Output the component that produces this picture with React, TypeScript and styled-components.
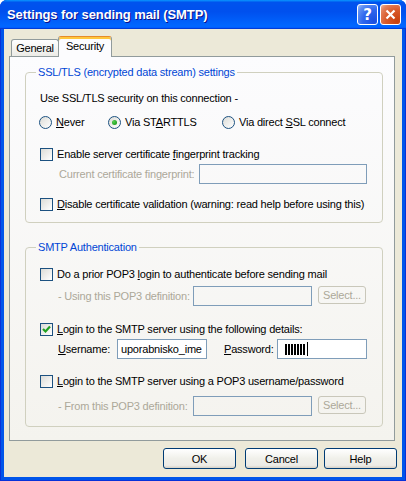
import React from "react";
import styled, { createGlobalStyle } from "styled-components";

const GlobalStyle = createGlobalStyle`
  html, body {
    margin: 0;
    padding: 0;
    background: #ffffff;
  }
  body {
    font-family: "Liberation Sans", Arial, sans-serif;
    font-size: 11px;
    letter-spacing: -0.2px;
    color: #000;
  }
`;

const Window = styled.div`
  width: 406px;
  height: 481px;
  box-sizing: border-box;
  display: flex;
  flex-direction: column;
  background: #0055ea;
  box-shadow: inset 0 0 0 1px #0831d9;
  border-radius: 7px 7px 0 0;
  overflow: hidden;
`;

const TitleBar = styled.div`
  height: 29px;
  flex: none;
  display: flex;
  align-items: center;
  justify-content: space-between;
  padding: 0 5px 0 7px;
  background: linear-gradient(
    180deg,
    #0997ff,
    #0053ee 8%,
    #0050ee 40%,
    #0066ff 88%,
    #0066ff 93%,
    #005bff 95%,
    #003dd7 96%,
    #003dd7
  );
`;

const Title = styled.span`
  color: #fff;
  font-weight: bold;
  font-size: 13px;
  letter-spacing: -0.1px;
  text-shadow: 1px 1px #0f1089;
`;

const CaptionButtons = styled.div`
  display: flex;
  gap: 2px;
`;

const CaptionButton = styled.div<{ $variant: "help" | "close" }>`
  box-sizing: border-box;
  width: 21px;
  height: 21px;
  border: 1px solid #fff;
  border-radius: 3px;
  display: flex;
  align-items: center;
  justify-content: center;
  color: #fff;
  font-family: "DejaVu Sans", sans-serif;
  font-weight: bold;
  font-size: 15px;
  background: ${(p) =>
    p.$variant === "close"
      ? "radial-gradient(circle at 85% 85%, #c8400c 0%, #d95a2b 50%, #e3805a 80%, #f0b9a0 100%)"
      : "radial-gradient(circle at 85% 85%, #1b4fe0 0%, #2f67ee 50%, #5d8ff3 80%, #a5c0f7 100%)"};
`;

const Client = styled.div`
  flex: 1;
  margin: 0 4px 4px;
  background: #ece9d8;
  display: flex;
  flex-direction: column;
  padding: 7px 7px 8px 5px;
`;

const TabStrip = styled.div`
  height: 20px;
  display: flex;
  align-items: flex-end;
  padding-left: 2px;
  position: relative;
  z-index: 1;
`;

const Tab = styled.div<{ $active?: boolean; $w: number }>`
  box-sizing: border-box;
  width: ${(p) => p.$w}px;
  height: ${(p) => (p.$active ? 21 : 17)}px;
  margin-bottom: ${(p) => (p.$active ? -1 : 0)}px;
  margin-left: ${(p) => (p.$active ? -1 : 0)}px;
  border: 1px solid #919b9c;
  border-bottom: none;
  border-radius: 3px 3px 0 0;
  display: flex;
  align-items: center;
  justify-content: center;
  padding-bottom: ${(p) => (p.$active ? 2 : 0)}px;
  background: ${(p) => (p.$active ? "#fcfcfe" : "linear-gradient(#ffffff, #ecebe6)")};
  ${(p) =>
    p.$active &&
    `
    border-top: 1px solid #e68b2c;
    box-shadow: inset 0 2px #ffc73c;
  `}
`;

const Panel = styled.div`
  box-sizing: border-box;
  height: 385px;
  flex: none;
  border: 1px solid #919b9c;
  background: linear-gradient(#fcfcfe, #f4f3ee);
  padding: 9px 11px 0 15px;
  display: flex;
  flex-direction: column;
`;

const Group = styled.fieldset<{ $mt?: number }>`
  margin: ${(p) => p.$mt ?? 0}px 0 0;
  padding: 0 14px 10px;
  border: 1px solid #d0d0bf;
  border-radius: 4px;
  display: flex;
  flex-direction: column;
  min-inline-size: 0;
`;

const GroupTitle = styled.legend`
  padding: 0 2px;
  margin-left: -4px;
  color: #0046d5;
  line-height: 13px;
`;

const Row = styled.div<{ $mt: number; $indent?: number }>`
  display: flex;
  align-items: center;
  min-height: 16px;
  margin-top: ${(p) => p.$mt}px;
  padding-left: ${(p) => p.$indent ?? 0}px;
`;

const RadioRow = styled.div`
  display: grid;
  grid-template-columns: 69px 114px auto;
  align-items: center;
  height: 16px;
  margin-top: 8px;
  margin-left: -1px;
`;

const Option = styled.label`
  display: inline-flex;
  align-items: center;
  gap: 4px;
  white-space: nowrap;
`;

const Check = styled.span`
  box-sizing: border-box;
  width: 13px;
  height: 13px;
  flex: none;
  border: 1px solid #1c5180;
  background: linear-gradient(135deg, #dcdcd7, #ffffff);
  display: inline-flex;
  align-items: center;
  justify-content: center;
`;

const Radio = styled(Check)`
  border-radius: 50%;
`;

const Dot = styled.span`
  width: 5px;
  height: 5px;
  border-radius: 50%;
  background: radial-gradient(circle at 35% 35%, #55d051, #21a121 70%);
`;

const Label = styled.span<{ $w?: number; $muted?: boolean; $ml?: number }>`
  flex: none;
  white-space: nowrap;
  width: ${(p) => (p.$w ? `${p.$w}px` : "auto")};
  margin-left: ${(p) => p.$ml ?? 0}px;
  color: ${(p) => (p.$muted ? "#aca899" : "#000")};
`;

const TextBox = styled.div<{ $w: number; $disabled?: boolean }>`
  box-sizing: border-box;
  flex: none;
  width: ${(p) => p.$w}px;
  height: 20px;
  border: 1px solid #7f9db9;
  background: ${(p) => (p.$disabled ? "transparent" : "#ffffff")};
  display: flex;
  align-items: center;
  padding-left: 3px;
  white-space: nowrap;
`;

const PasswordMask = styled.span`
  width: 20px;
  height: 11px;
  margin-left: 4px;
  background: repeating-linear-gradient(90deg, #000 0 2px, transparent 2px 3px);
`;

const Caret = styled.span`
  width: 1px;
  height: 14px;
  margin-left: 2px;
  background: #000;
`;

const SelectButton = styled.div`
  box-sizing: border-box;
  flex: none;
  width: 48px;
  height: 18px;
  margin-left: 6px;
  align-self: flex-start;
  border: 1px solid #c9c7ba;
  border-radius: 3px;
  color: #aca899;
  display: flex;
  align-items: center;
  justify-content: center;
`;

const ButtonBar = styled.div`
  display: flex;
  justify-content: flex-end;
  gap: 6px;
  margin-top: 7px;
  margin-right: -2px;
`;

const DialogButton = styled.div<{ $space?: number }>`
  box-sizing: border-box;
  width: 73px;
  height: 21px;
  margin-right: ${(p) => p.$space ?? 0}px;
  border: 1px solid #003c74;
  border-radius: 3px;
  background: linear-gradient(180deg, #ffffff, #f0f0ea 50%, #ecebe6 86%, #d6d0c5);
  display: flex;
  align-items: center;
  justify-content: center;
`;

const CheckBox = ({ checked }: { checked?: boolean }) => (
  <Check>
    {checked && (
      <svg width="9" height="9" viewBox="0 0 9 9">
        <polyline points="1,4 3.5,6.5 8,1.5" fill="none" stroke="#21a121" strokeWidth="2.2" />
      </svg>
    )}
  </Check>
);

const RadioButton = ({ checked }: { checked?: boolean }) => <Radio>{checked && <Dot />}</Radio>;

export default function App() {
  return (
    <>
      <GlobalStyle />
      <Window>
        <TitleBar>
          <Title>Settings for sending mail (SMTP)</Title>
          <CaptionButtons>
            <CaptionButton $variant="help">?</CaptionButton>
            <CaptionButton $variant="close">
              <svg width="11" height="11" viewBox="0 0 11 11">
                <path d="M1.5 1.5 L9.5 9.5 M9.5 1.5 L1.5 9.5" stroke="#fff" strokeWidth="2.2" />
              </svg>
            </CaptionButton>
          </CaptionButtons>
        </TitleBar>

        <Client>
          <TabStrip>
            <Tab $w={48}>General</Tab>
            <Tab $w={54} $active>
              Security
            </Tab>
          </TabStrip>

          <Panel>
            <Group>
              <GroupTitle>SSL/TLS (encrypted data stream) settings</GroupTitle>
              <Row $mt={11}>
                <Label>Use SSL/TLS security on this connection -</Label>
              </Row>
              <RadioRow>
                <Option>
                  <RadioButton />
                  <span>
                    <u>N</u>ever
                  </span>
                </Option>
                <Option>
                  <RadioButton checked />
                  <span>
                    Via ST<u>A</u>RTTLS
                  </span>
                </Option>
                <Option>
                  <RadioButton />
                  <span>
                    Via direct <u>S</u>SL connect
                  </span>
                </Option>
              </RadioRow>
              <Row $mt={16}>
                <Option>
                  <CheckBox />
                  <span>
                    Enable server certificate <u>f</u>ingerprint tracking
                  </span>
                </Option>
              </Row>
              <Row $mt={2} $indent={19}>
                <Label $w={140} $muted>
                  Current certificate fingerprint:
                </Label>
                <TextBox $w={168} $disabled />
              </Row>
              <Row $mt={12}>
                <Option>
                  <CheckBox />
                  <span>
                    <u>D</u>isable certificate validation (warning: read help before using this)
                  </span>
                </Option>
              </Row>
            </Group>

            <Group $mt={18}>
              <GroupTitle>SMTP Authentication</GroupTitle>
              <Row $mt={12}>
                <Option>
                  <CheckBox />
                  <span>
                    Do a prior POP3 <u>l</u>ogin to authenticate before sending mail
                  </span>
                </Option>
              </Row>
              <Row $mt={4} $indent={18}>
                <Label $w={135} $muted>
                  - Using this POP3 definition:
                </Label>
                <TextBox $w={119} $disabled />
                <SelectButton>Select...</SelectButton>
              </Row>
              <Row $mt={15}>
                <Option>
                  <CheckBox checked />
                  <span>
                    <u>L</u>ogin to the SMTP server using the following details:
                  </span>
                </Option>
              </Row>
              <Row $mt={2} $indent={18}>
                <Label $w={59}>
                  <u>U</u>sername:
                </Label>
                <TextBox $w={90}>uporabnisko_ime</TextBox>
                <Label $w={53} $ml={17}>
                  <u>P</u>assword:
                </Label>
                <TextBox $w={90}>
                  <PasswordMask />
                  <Caret />
                </TextBox>
              </Row>
              <Row $mt={14}>
                <Option>
                  <CheckBox />
                  <span>
                    <u>L</u>ogin to the SMTP server using a POP3 username/password
                  </span>
                </Option>
              </Row>
              <Row $mt={7} $indent={18}>
                <Label $w={135} $muted>
                  - From this POP3 definition:
                </Label>
                <TextBox $w={119} $disabled />
                <SelectButton>Select...</SelectButton>
              </Row>
            </Group>
          </Panel>

          <ButtonBar>
            <DialogButton $space={3}>OK</DialogButton>
            <DialogButton>Cancel</DialogButton>
            <DialogButton>Help</DialogButton>
          </ButtonBar>
        </Client>
      </Window>
    </>
  );
}
